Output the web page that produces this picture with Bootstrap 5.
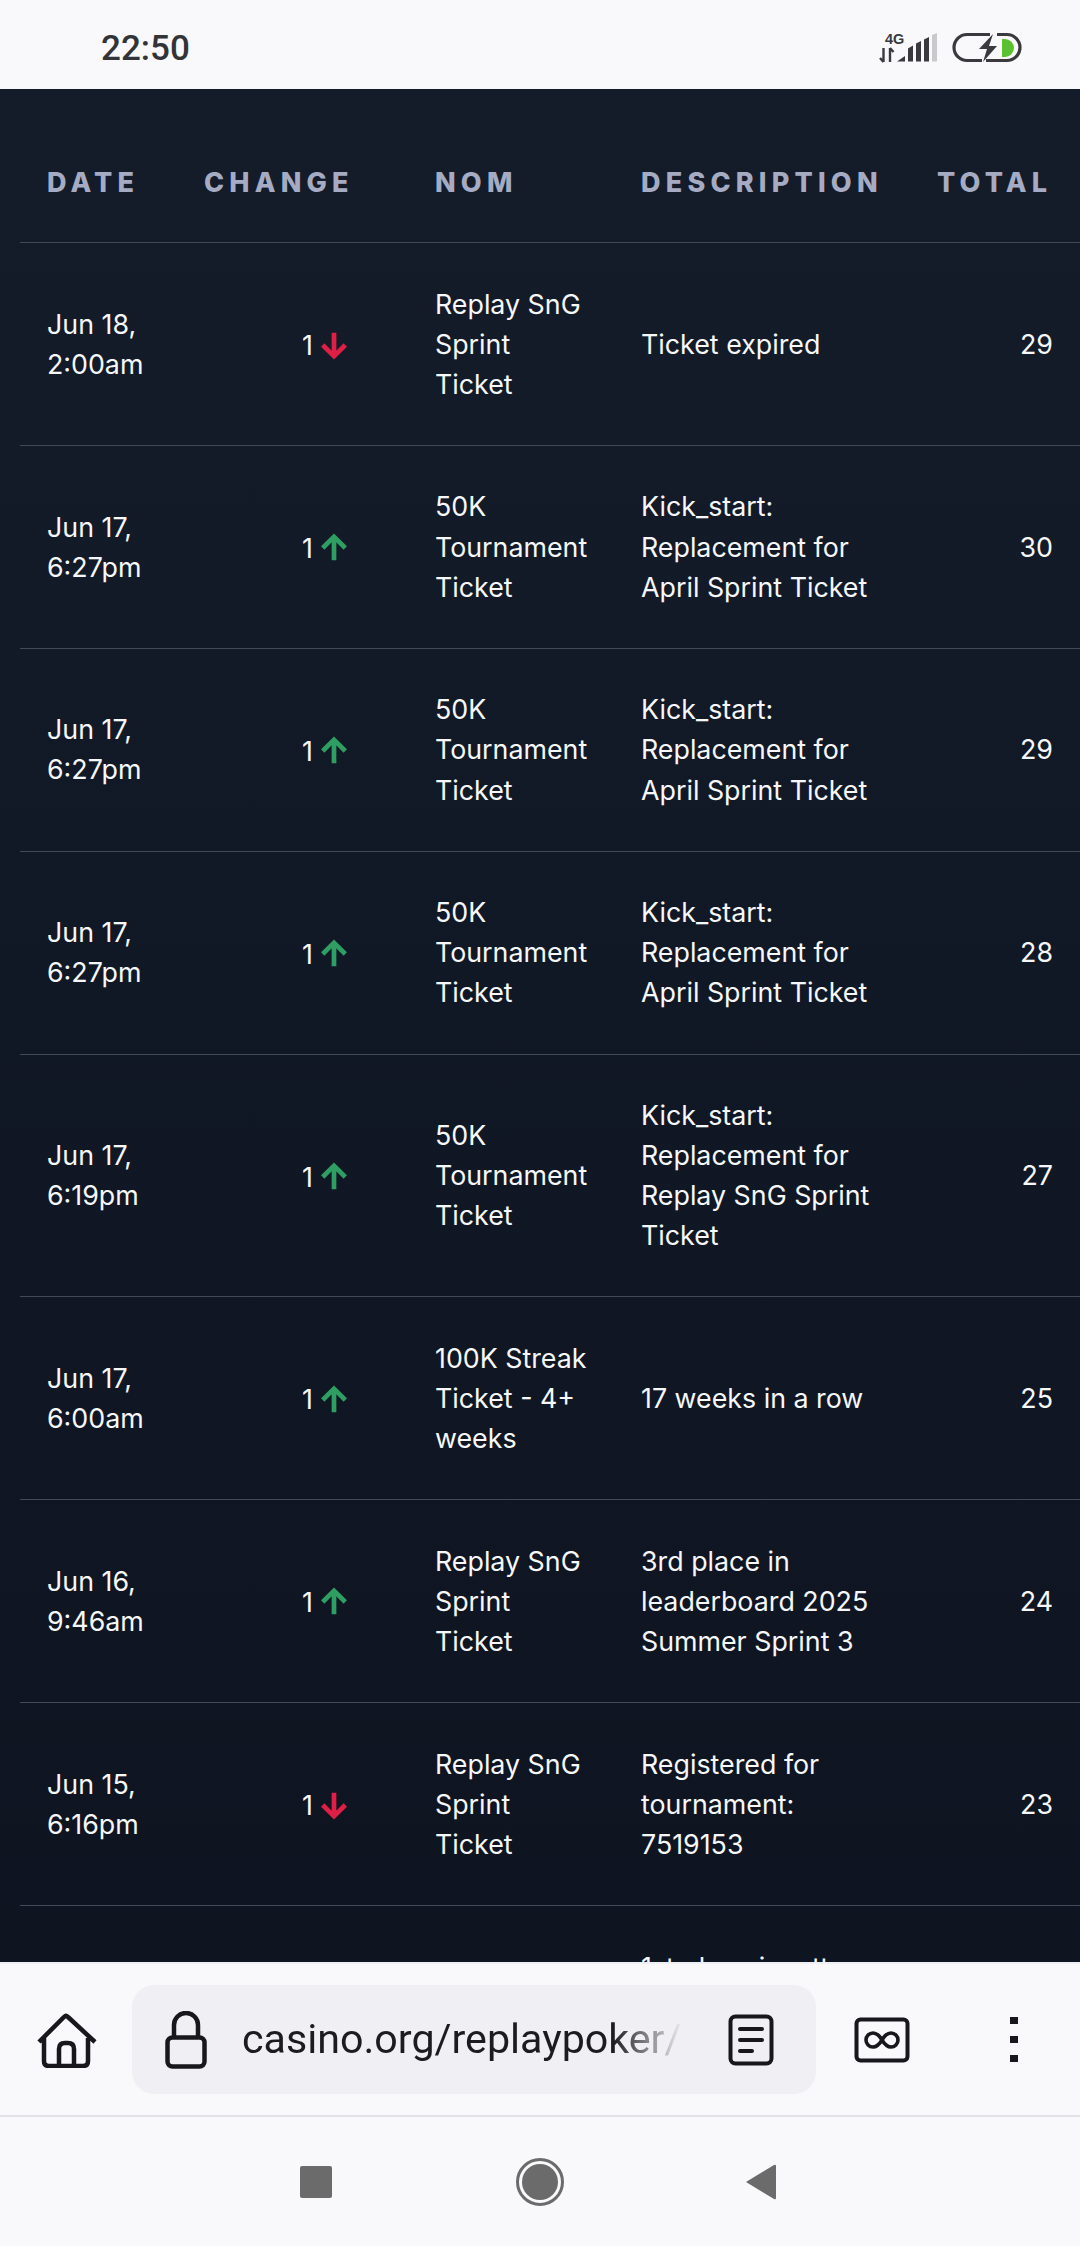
<!DOCTYPE html>
<html lang="en">
<head>
<meta charset="utf-8">
<title>Ticket history</title>
<link href="https://cdn.jsdelivr.net/npm/bootstrap@5.3.0/dist/css/bootstrap.min.css" rel="stylesheet">
<style>
html,body{height:2246px;margin:0;background:#f9f9fb;overflow:hidden}
.phone{width:1080px;height:2246px}
.statusbar{height:89px;background:#f9f9fb;padding-left:101px}
.clock{font:500 35px/1 Roboto,sans-serif;color:#333438;position:relative;top:4px}
.statusicons{display:block;margin-top:2px}
.pagearea{height:1873px;overflow:hidden;padding:34px 0 0 20px;background:linear-gradient(180deg,#141c2a 0%,#0e1420 100%)}
.ledger{width:1060px;table-layout:fixed;margin:0;font-family:Inter,sans-serif;--bs-table-bg:transparent;--bs-table-color:#f6f7f9;color:#f6f7f9;border-collapse:collapse}
.ledger th,.ledger td{border-bottom:1px solid #424957;font-size:26.8px;line-height:40.1px;padding:40.6px 27px 41px;vertical-align:middle;background:transparent;color:#f6f7f9;box-shadow:none}
.ledger thead th{font-weight:800;color:#a5abc2;letter-spacing:5.2px;font-size:27px;padding:40px 0 40px 27px;white-space:nowrap;line-height:39px}
.ledger .c-change{padding-right:58px}
.ledger .c-nom{padding-right:24px}
.ledger .c-total{text-align:right}
.ledger thead .c-total{padding-left:26px;text-align:left}
.amount{display:inline-flex;align-items:center;gap:5px;vertical-align:middle}
.ledger tbody tr:last-child td{border-bottom:0;vertical-align:top}
.browserbar{height:155px;background:#f9f9fb;border-top:2px solid #eff0f5;border-bottom:2px solid #e3e3e7;padding-left:37px}
.pill{width:684px;height:109px;background:#f0f0f4;border-radius:22px;margin-left:35px;padding-left:33px}
.urltext{width:441px;margin-left:35px;font:400 41.2px/1.2 Roboto,sans-serif;color:#1b1b20;white-space:nowrap;overflow:hidden;-webkit-mask-image:linear-gradient(90deg,#000 84%,transparent 100%);mask-image:linear-gradient(90deg,#000 84%,transparent 100%)}
.readericon{margin-left:45px}
.tabicon{margin-left:38px}
.moreicon{margin-left:100px}
.navbar-soft{height:129px;padding-left:300px}
.navsquare{width:32px;height:32px;background:#6b6b6b;border-radius:2px;margin-right:184px}
.navcircle{margin-right:181px}
</style>
</head>
<body>
<div class="phone d-flex flex-column">
  <div class="statusbar d-flex align-items-center justify-content-between">
    <span class="clock">22:50</span>
    <svg class="statusicons" width="240" height="70" viewBox="0 0 240 70" aria-hidden="true">
      <text x="45" y="33" font-family="Liberation Sans, sans-serif" font-weight="700" font-size="14.5" fill="#3a3a3e">4G</text>
      <path d="M43.500 37v14M43.500 51l-3.500-4M50 51V37M50 37l3.500 4" stroke="#3a3a3e" stroke-width="2.400" fill="none"/>
      <path d="M57 50.600l8-5.600v5.600zM68 37.500l5-3v16.100h-5zM76 32.500l5-2.500v20.600h-5zM84 28.500l5-2.500v24.600h-5z" fill="#3a3a3e"/>
      <path d="M92 24l5-2v28.600h-5z" fill="#c9c9cb"/>
      <path d="M150 23.500h-23a13 13 0 0 0 0 26h15M157 23.500h10a13 13 0 0 1 0 26h-21" fill="none" stroke="#3a3a3e" stroke-width="3.200"/>
      <path d="M153 23l-14 15h8l-4 13 14-16h-8z" fill="#3a3a3e"/>
      <path d="M162 28h3a9 9 0 0 1 0 18h-3z" fill="#5cc12e"/>
    </svg>
  </div>

  <div class="pagearea">
    <table class="table ledger">
      <colgroup><col style="width:157px"><col style="width:231px"><col style="width:206px"><col style="width:297px"><col style="width:169px"></colgroup>
      <thead>
        <tr><th>DATE</th><th>CHANGE</th><th>NOM</th><th>DESCRIPTION</th><th class="c-total">TOTAL</th></tr>
      </thead>
      <tbody>
        <tr><td class="text-nowrap">Jun 18,<br>2:00am</td><td class="c-change text-end"><span class="amount">1<svg width="32" height="30" viewBox="0 0 34 30"><path d="M17 2v24M5 15l12 12 12-12" fill="none" stroke="#df1f45" stroke-width="5"/></svg></span></td><td class="c-nom">Replay SnG Sprint Ticket</td><td>Ticket expired</td><td class="c-total">29</td></tr>
        <tr><td class="text-nowrap">Jun 17,<br>6:27pm</td><td class="c-change text-end"><span class="amount">1<svg width="32" height="30" viewBox="0 0 34 30"><path d="M17 28V4M5 15L17 3l12 12" fill="none" stroke="#2f9e62" stroke-width="5"/></svg></span></td><td class="c-nom">50K Tournament Ticket</td><td>Kick_start: Replacement for April Sprint Ticket</td><td class="c-total">30</td></tr>
        <tr><td class="text-nowrap">Jun 17,<br>6:27pm</td><td class="c-change text-end"><span class="amount">1<svg width="32" height="30" viewBox="0 0 34 30"><path d="M17 28V4M5 15L17 3l12 12" fill="none" stroke="#2f9e62" stroke-width="5"/></svg></span></td><td class="c-nom">50K Tournament Ticket</td><td>Kick_start: Replacement for April Sprint Ticket</td><td class="c-total">29</td></tr>
        <tr><td class="text-nowrap">Jun 17,<br>6:27pm</td><td class="c-change text-end"><span class="amount">1<svg width="32" height="30" viewBox="0 0 34 30"><path d="M17 28V4M5 15L17 3l12 12" fill="none" stroke="#2f9e62" stroke-width="5"/></svg></span></td><td class="c-nom">50K Tournament Ticket</td><td>Kick_start: Replacement for April Sprint Ticket</td><td class="c-total">28</td></tr>
        <tr><td class="text-nowrap">Jun 17,<br>6:19pm</td><td class="c-change text-end"><span class="amount">1<svg width="32" height="30" viewBox="0 0 34 30"><path d="M17 28V4M5 15L17 3l12 12" fill="none" stroke="#2f9e62" stroke-width="5"/></svg></span></td><td class="c-nom">50K Tournament Ticket</td><td>Kick_start: Replacement for Replay SnG Sprint Ticket</td><td class="c-total">27</td></tr>
        <tr><td class="text-nowrap">Jun 17,<br>6:00am</td><td class="c-change text-end"><span class="amount">1<svg width="32" height="30" viewBox="0 0 34 30"><path d="M17 28V4M5 15L17 3l12 12" fill="none" stroke="#2f9e62" stroke-width="5"/></svg></span></td><td class="c-nom">100K Streak Ticket - 4+ weeks</td><td>17 weeks in a row</td><td class="c-total">25</td></tr>
        <tr><td class="text-nowrap">Jun 16,<br>9:46am</td><td class="c-change text-end"><span class="amount">1<svg width="32" height="30" viewBox="0 0 34 30"><path d="M17 28V4M5 15L17 3l12 12" fill="none" stroke="#2f9e62" stroke-width="5"/></svg></span></td><td class="c-nom">Replay SnG Sprint Ticket</td><td>3rd place in leaderboard 2025 Summer Sprint 3</td><td class="c-total">24</td></tr>
        <tr><td class="text-nowrap">Jun 15,<br>6:16pm</td><td class="c-change text-end"><span class="amount">1<svg width="32" height="30" viewBox="0 0 34 30"><path d="M17 2v24M5 15l12 12 12-12" fill="none" stroke="#df1f45" stroke-width="5"/></svg></span></td><td class="c-nom">Replay SnG Sprint Ticket</td><td>Registered for tournament: 7519153</td><td class="c-total">23</td></tr>
        <tr><td></td><td></td><td></td><td>1st place in mtt</td><td></td></tr>
      </tbody>
    </table>
  </div>

  <div class="browserbar d-flex align-items-center">
    <svg width="60" height="56" viewBox="0 0 60 56" aria-hidden="true"><path d="M2 30L27 5q2-2 4 0l27 25M7 26v23q0 5 5 5h34q5 0 5-5V26M22 54V37q0-6 6-6h3q6 0 6 6v17" fill="none" stroke="#17171c" stroke-width="4.500" stroke-linejoin="round"/></svg>
    <div class="pill d-flex align-items-center">
      <svg width="42" height="58" viewBox="0 0 42 58" aria-hidden="true"><path d="M9 26V14a12 12 0 0 1 24 0v12" fill="none" stroke="#17171c" stroke-width="4.500"/><rect x="2.500" y="26.500" width="37" height="29" rx="5" fill="none" stroke="#17171c" stroke-width="4.500"/></svg>
      <span class="urltext">casino.org/replaypoker/</span>
      <svg class="readericon" width="46" height="52" viewBox="0 0 46 52" aria-hidden="true"><rect x="2.500" y="2.500" width="41" height="47" rx="5" fill="none" stroke="#17171c" stroke-width="4"/><path d="M12 15h22M12 26h22M12 37h12" stroke="#17171c" stroke-width="4" stroke-linecap="round"/></svg>
    </div>
    <svg class="tabicon" width="56" height="46" viewBox="0 0 56 46" aria-hidden="true"><rect x="2.500" y="2.500" width="51" height="41" rx="4" fill="none" stroke="#17171c" stroke-width="4"/><path d="M28 23c-3-5-6-7-9-7a7 7 0 0 0 0 14c3 0 6-2 9-7s6-7 9-7a7 7 0 0 1 0 14c-3 0-6-2-9-7z" fill="none" stroke="#17171c" stroke-width="3.600"/></svg>
    <svg class="moreicon" width="8" height="46" viewBox="0 0 8 46" aria-hidden="true"><path d="M0 0h8v7H0zM0 19h8v7H0zM0 38h8v7H0z" fill="#17171c"/></svg>
  </div>

  <div class="navbar-soft d-flex align-items-center">
    <span class="navsquare"></span>
    <svg class="navcircle" width="48" height="50" viewBox="0 0 48 50" aria-hidden="true"><circle cx="24" cy="25" r="22.500" fill="none" stroke="#6b6b6b" stroke-width="3"/><circle cx="24" cy="25" r="18" fill="#6b6b6b"/></svg>
    <svg width="32" height="38" viewBox="0 0 32 38" aria-hidden="true"><path d="M1 19L29 2q2-1 2 1v32q0 2-2 1z" fill="#6b6b6b"/></svg>
  </div>
</div>
<script src="https://cdn.jsdelivr.net/npm/bootstrap@5.3.0/dist/js/bootstrap.bundle.min.js"></script>
</body>
</html>
